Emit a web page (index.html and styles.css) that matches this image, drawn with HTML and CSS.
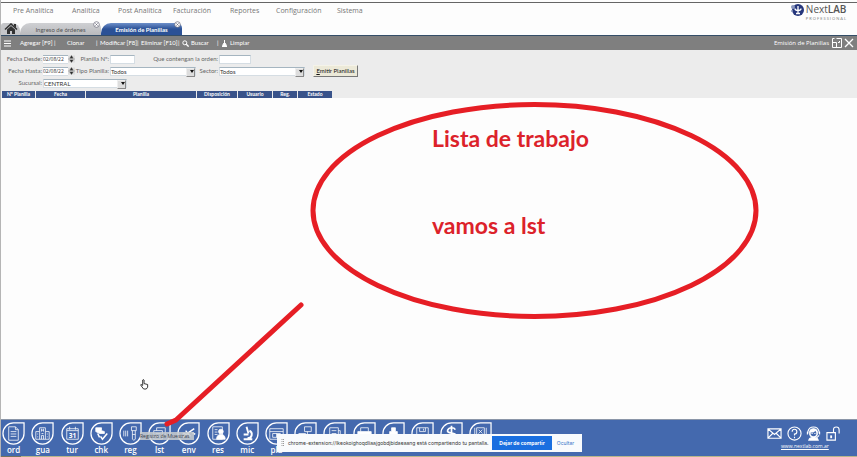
FILE: index.html
```html
<!DOCTYPE html>
<html lang="es">
<head>
<meta charset="utf-8">
<title>NextLAB - Emisión de Planillas</title>
<link rel="stylesheet" href="styles.css">
</head>
<body>
<header class="top">
  <nav class="menu">
    <a class="m1" href="#">Pre Analítica</a>
    <a class="m2" href="#">Analítica</a>
    <a class="m3" href="#">Post Analítica</a>
    <a class="m4" href="#">Facturación</a>
    <a class="m5" href="#">Reportes</a>
    <a class="m6" href="#">Configuración</a>
    <a class="m7" href="#">Sistema</a>
  </nav>
  <div class="brand">
    <svg class="brand-mark" viewBox="0 0 14 14"><circle cx="8" cy="7" r="6" fill="#26377c"/><circle cx="3" cy="4" r="2" fill="#8996bd"/><circle cx="2" cy="8" r="1" fill="#8996bd"/><path d="M8 3v7.500M5 5.500q0 2 3 2t3-2M6 10.500h4" stroke="#fff" stroke-width="1.300" fill="none"/></svg>
    <div class="brand-name"><span class="brand-main">Next<b>LAB</b></span><span class="brand-sub">PROFESSIONAL</span></div>
  </div>
</header>
<div class="tabs">
  <a class="home" href="#" aria-label="Inicio"><svg viewBox="0 0 14 12"><path d="M1 6.500 7 1l6 5.500" fill="none" stroke="#333" stroke-width="1.600"/><path d="M3 6.500 7 3l4 3.500V11H8V8H6v3H3z" fill="#333"/><path d="M10 1h2v4l-2-2z" fill="#333"/></svg></a>
  <div class="tab"><span>Ingreso de órdenes</span><button class="close" aria-label="Cerrar Ingreso de órdenes"><svg viewBox="0 0 7 7"><circle cx="3.500" cy="3.500" r="2.800"/><path d="m2.300 2.300 2.400 2.400m0-2.400L2.300 4.700"/></svg></button></div>
  <div class="tab active"><span>Emisión de Planillas</span><button class="close" aria-label="Cerrar Emisión de Planillas"><svg viewBox="0 0 7 7"><circle cx="3.500" cy="3.500" r="2.800"/><path d="m2.300 2.300 2.400 2.400m0-2.400L2.300 4.700"/></svg></button></div>
</div>
<div class="toolbar">
  <button class="burger" aria-label="Menú"><svg viewBox="0 0 7 7"><path d="M0 1h7M0 3.500h7M0 6h7" stroke="#fff"/></svg></button>
  <button class="t-add">Agregar [F9]</button><i>|</i>
  <button class="t-clone">Clonar</button><i>|</i>
  <button class="t-edit">Modificar [F8]</button><i>|</i>
  <button class="t-del">Eliminar [F10]</button><i>|</i>
  <button class="t-find"><svg viewBox="0 0 7 7"><circle cx="2.800" cy="2.800" r="2" fill="none" stroke="#fff"/><path d="m4.300 4.300 2.300 2.300" stroke="#fff" stroke-width="1.300"/></svg>Buscar</button><i>|</i>
  <button class="t-clean"><svg viewBox="0 0 7 7"><path d="M3.500 0v3M3 3h1l1.500 2.500h-4zM1 6.500h5" fill="#fff" stroke="#fff"/></svg>Limpiar</button>
  <strong>Emisión de Planillas</strong>
  <button class="win" aria-label="Restaurar"><svg viewBox="0 0 10 10"><path d="M4.500.5h5v9h-9v-9h2M.5 4.500h4v5M6 4.500h1.500V3" fill="none" stroke="#fff"/></svg></button>
  <button class="win" aria-label="Cerrar"><svg viewBox="0 0 10 10"><path d="m1 1 8 8M9 1 1 9" stroke="#fff" stroke-width="1.300"/></svg></button>
</div>
<form class="filters">
  <label class="c1" for="desde">Fecha Desde:</label>
  <span class="date"><input id="desde" value="02/08/22"><svg viewBox="0 0 8 8"><path d="M0 0h8v8H0z" fill="#ddd"/><path d="m4 0 2 3H2zM4 8l2-3H2zM0 4h8" fill="#222" stroke="#666" stroke-width=".5"/></svg></span>
  <label class="c3" for="num">Planilla Nº:</label>
  <input class="c4 num" id="num">
  <label class="c45" for="orden">Que contengan la orden:</label>
  <input class="c6 orden" id="orden">
  <label class="c1 r2" for="hasta">Fecha Hasta:</label>
  <span class="date r2"><input id="hasta" value="02/08/22"><svg viewBox="0 0 8 8"><path d="M0 0h8v8H0z" fill="#ddd"/><path d="m4 0 2 3H2zM4 8l2-3H2zM0 4h8" fill="#222" stroke="#666" stroke-width=".5"/></svg></span>
  <label class="c3 r2" for="tipo">Tipo Planilla:</label>
  <span class="pick c4 r2"><select id="tipo"><option>Todos</option></select></span>
  <label class="c5 r2" for="sector">Sector:</label>
  <span class="pick c6 r2"><select id="sector"><option>Todos</option></select></span>
  <button type="button" class="emit"><u>E</u>mitir Planillas</button>
  <label class="c1 r3" for="sucursal">Sucursal:</label>
  <span class="pick suc r3"><select id="sucursal"><option>CENTRAL</option></select></span>
</form>
<table class="list">
  <thead><tr><th class="w1">Nº Planilla</th><th class="w2">Fecha</th><th class="w3">Planilla</th><th class="w4">Disposición</th><th class="w5">Usuario</th><th class="w6">Reg.</th><th class="w7">Estado</th></tr></thead>
</table>
<main class="work"></main>
<footer class="dock">
  <div class="apps">
    <a href="#"><svg viewBox="0 0 24 24"><path class="ring" d="M12 1h11v11A11 11 0 1 1 12 1z"/><path d="M7 5h7l3 3v11H7zM14 5v3h3M9 10h6M9 12.500h6M9 15h6"/></svg>ord</a>
    <a href="#"><svg viewBox="0 0 24 24"><path class="ring" d="M12 1h11v11A11 11 0 1 1 12 1z"/><path d="M5 10h4V6h6v4h4v8H5zM11 18v-4h2v4M9 10v8M15 10v8M11 7v3M13 7v3M11 8.500h2M7 12v1M7 15v1M17 12v1M17 15v1M11 12h2"/></svg>gua</a>
    <a href="#"><svg viewBox="0 0 24 24"><path class="ring" d="M12 1h11v11A11 11 0 1 1 12 1z"/><path d="M6 7h12v11H6zM6 9h12M9 5v3M15 5v3"/><text x="12" y="16.500">31</text></svg>tur</a>
    <a href="#"><svg viewBox="0 0 24 24"><path class="ring" d="M12 1h11v11A11 11 0 1 1 12 1z"/><path class="fill" d="M6 6h6v3l3 1v2h-5l-4-2z"/><path d="m11 15 2 3 5-6M8 12l2 4" stroke-width="1.600"/></svg>chk</a>
    <a href="#"><svg viewBox="0 0 24 24"><path class="ring" d="M12 1h11v11A11 11 0 1 1 12 1z"/><path d="M5 9v6M7 9v6M9 9v6M13 5h5v4h-5zM14 9v9q1.500 2 3 0V9M14 13h3"/></svg>reg</a>
    <a href="#"><svg viewBox="0 0 24 24"><path class="ring" d="M12 1h11v11A11 11 0 1 1 12 1z"/><path d="M6 9h9v9H6zM9 9V6h9v9h-3M8 12h5M8 15h5"/></svg>lst</a>
    <a href="#"><svg viewBox="0 0 24 24"><path class="ring" d="M12 1h11v11A11 11 0 1 1 12 1z"/><path d="m6 16 6-5 6-4M9 9l5 6M6 12h3M16 11l3 2" stroke-width="1.600"/></svg>env</a>
    <a href="#"><svg viewBox="0 0 24 24"><path class="ring" d="M12 1h11v11A11 11 0 1 1 12 1z"/><path d="M6 5h10v13H6zM8 8h3M8 10.500h3M8 13h3"/><circle class="fill" cx="14.500" cy="10" r="2.500"/><path class="fill" d="M10 18q0-5 4.500-5t4.500 5z"/></svg>res</a>
    <a href="#"><svg viewBox="0 0 24 24"><path class="ring" d="M12 1h11v11A11 11 0 1 1 12 1z"/><path d="m11 5 2 7M8 18h9M12 17c5 0 6-6 2-8M8 13h5" stroke-width="2"/></svg>mic</a>
    <a href="#"><svg viewBox="0 0 24 24"><path class="ring" d="M12 1h11v11A11 11 0 1 1 12 1z"/><path d="M5 7h14v11H5zM5 10h14M8 12h8v4H8zM12 12v4"/></svg>pla</a>
    <a href="#" aria-label="Equipos"><svg viewBox="0 0 24 24"><path class="ring" d="M12 1h11v11A11 11 0 1 1 12 1z"/><path d="M11 5h7v5h-7zM5 12h7v5H5zM14 10v6h5"/></svg></a>
    <a href="#" aria-label="Informes"><svg viewBox="0 0 24 24"><path class="ring" d="M12 1h11v11A11 11 0 1 1 12 1z"/><path d="M7 6h9v12H7zM9 9h5M9 12h5M16 9h2v9"/></svg></a>
    <a href="#" aria-label="Imprimir"><svg viewBox="0 0 24 24"><path class="ring" d="M12 1h11v11A11 11 0 1 1 12 1z"/><path class="fill" d="M5 10h14v6H5z"/><path d="M8 10V6h8v4M8 15v4h8v-4"/></svg></a>
    <a href="#" aria-label="Muestras"><svg viewBox="0 0 24 24"><path class="ring" d="M12 1h11v11A11 11 0 1 1 12 1z"/><path class="fill" d="M10 6h4v4h2v8H8v-8h2z"/></svg></a>
    <a href="#" aria-label="Guardar"><svg viewBox="0 0 24 24"><path class="ring" d="M12 1h11v11A11 11 0 1 1 12 1z"/><path d="M6 6h12v12H6zM9 6v4h6V6M9 18v-5h6v5M13 7v2"/></svg></a>
    <a href="#" aria-label="Caja"><svg viewBox="0 0 24 24"><path class="ring" d="M12 1h11v11A11 11 0 1 1 12 1z"/><path d="M16 8q-1-2-4-2t-4 2.500 4 3 4 3-4 2.500-4-2M12 4v15" stroke-width="1.800"/></svg></a>
    <a href="#" aria-label="Estadísticas"><svg viewBox="0 0 24 24"><path class="ring" d="M12 1h11v11A11 11 0 1 1 12 1z"/><path d="M6 6v12M8 6h8v9H8zM18 6v12M10 8l4 4M14 8l-4 4"/></svg></a>
  </div>
  <div class="support">
    <div class="support-icons">
      <a href="#" aria-label="Correo"><svg viewBox="0 0 16 16"><path d="M1 3h14v10H1zl7 6 7-6M1 13l5-5M15 13l-5-5"/></svg></a>
      <a href="#" aria-label="Ayuda"><svg viewBox="0 0 16 16"><circle cx="8" cy="8" r="7"/><path d="M5.500 6q0-2.500 2.500-2.500T10.500 6 8 8.500V10M8 11.500V13"/></svg></a>
      <a href="#" aria-label="Soporte"><svg viewBox="0 0 16 16"><path d="M2 8V6q1-5 6-5t6 5v2M1.500 6v3M14.500 6v3M14 10l-3 3"/><path class="fill" d="M4 6q1-3 4-3t4 3v3q-1 3-4 3T4 9zM3 15q1-3 5-3t5 3z"/><path class="face" d="M5 7q4 0 5-2l1 2v2q-1 2-3 2T5 9z"/><path d="M6.500 7.500v1M9.500 7.500v1"/></svg></a>
      <a href="#" aria-label="Desbloquear"><svg viewBox="0 0 16 16"><path d="M1 7h9v8H1zM8 7V4q0-3 3-3t3 3v4"/><path d="M5.500 10v3" stroke-width="2"/></svg></a>
    </div>
    <a class="site" href="#">www.nextlab.com.ar</a>
  </div>
</footer>
<div class="edge"><span></span></div>
<div class="tip">Registro de Muestras</div>
<div class="share">
  <svg viewBox="0 0 3 8"><path d="M1 0v8M2.500 0v8" stroke="#999" stroke-dasharray="1 1"/></svg>
  <span>chrome-extension://lkeokoighoqdliaajgobdjbidaeaang está compartiendo tu pantalla.</span>
  <button class="stop">Dejar de compartir</button>
  <button class="hide">Ocultar</button>
</div>
<svg class="marks" viewBox="0 0 857 457"><ellipse cx="534.500" cy="210.500" rx="221.500" ry="106"/><path d="m301 305-125 115-9 4"/></svg>
<p class="note first">Lista de trabajo</p>
<p class="note second">vamos a lst</p>
<svg class="hand" viewBox="0 0 10 12"><path d="M3 7V1q1-1 1.500 0v4l4 1v3L7 11H4L1 7V6z" fill="#fff" stroke="#222"/></svg>
</body>
</html>
```
FILE: styles.css
```css
* { box-sizing: border-box; }
body {
  margin: 0;
  min-height: 100vh;
  display: flex;
  flex-direction: column;
  position: relative;
  background: #fdfdfd;
  border-left: 1px solid #b5b5b5;
  font: 6px/8px Lato, sans-serif;
  color: #666;
  overflow: hidden;
}
a { color: inherit; text-decoration: none; }
button, input, select { font: inherit; color: inherit; margin: 0; padding: 0; border: 0; border-radius: 0; background: none; }
svg { display: block; flex: none; }
.top { display: flex; justify-content: space-between; height: 21px; margin-top: 2px; border-top: 1px solid #666; }
.menu { display: flex; padding-left: 12px; font: 7px/15px "Open Sans", sans-serif; color: #777; white-space: nowrap; }
.m1 { width: 59px; }
.m2 { width: 46px; }
.m3 { width: 55px; }
.m4 { width: 57px; }
.m5 { width: 46px; }
.m6 { width: 61px; }
.brand { display: flex; gap: 2px; padding-right: 10px; }
.brand-mark { width: 14px; height: 14px; }
.brand-name { display: flex; flex-direction: column; }
.brand-main { font: 10px/13px "Open Sans", sans-serif; color: #555; }
.brand-main b { font-weight: 600; }
.brand-sub { font-size: 4px; line-height: 5px; letter-spacing: 1px; color: #888; }
.tabs { display: flex; height: 12px; }
.home { width: 19px; background: #c5c6c9; border-radius: 3px 8px 0 0; }
.home svg { width: 14px; height: 12px; margin-left: 3px; }
.tab { position: relative; width: 81px; text-align: center; font-size: 6px; line-height: 14px; background: linear-gradient(#cfd0d3, #b9babd); border-radius: 10px 5px 0 0; color: #555; }
.tab.active { background: linear-gradient(#6d8fc9, #2b5196 50%); color: #fff; font-weight: 700; }
.close { position: absolute; top: -2px; right: 1px; width: 7px; height: 7px; }
.close svg { fill: #fff; stroke: #667; stroke-width: 0.7; }
.toolbar { display: flex; align-items: center; height: 15px; background: #7f7f7f; border-top: 1px solid #344e68; color: #fff; padding: 0 1px 0 3px; }
.toolbar button { display: flex; align-items: center; gap: 2px; white-space: nowrap; text-align: left; }
.toolbar svg { width: 7px; height: 7px; }
.toolbar i { width: 4px; font-style: normal; }
.toolbar strong { margin-left: auto; margin-right: 3px; font: 6px/8px "Open Sans", sans-serif; white-space: nowrap; }
.toolbar .win { margin-right: 2px; }
.toolbar .win svg { width: 10px; height: 10px; }
.toolbar .t-add { width: 34px; }
.burger { width: 16px; }
.toolbar .t-clone { width: 38px; padding-left: 9px; }
.t-edit { width: 37px; }
.t-del { width: 37px; }
.t-find { width: 35px; }
.filters {
  display: grid;
  grid-template-columns: 42px 32px 35px 86px 23px 86px 52px;
  grid-template-rows: repeat(3, 10px);
  row-gap: 2px;
  height: 41px;
  padding-top: 4px;
  align-items: center;
  background: #ececec;
}
.filters label { justify-self: end; padding-right: 1px; white-space: nowrap; grid-row: 1; }
.filters input, .filters select { height: 9px; background: #fff; border: 1px solid #d5dde3; border-top-color: #a5b5c0; color: #333; line-height: 7px; width: 100%; display: block; }
.filters .r2 { grid-row: 2; }
.filters .r3 { grid-row: 3; }
.c1 { grid-column: 1; }
.c3 { grid-column: 3; }
.c4 { grid-column: 4; }
.c5 { grid-column: 5; }
.c6 { grid-column: 6; }
.c45 { grid-column: 4 / 6; }
.date { grid-column: 2; display: flex; align-items: center; grid-row: 1; }
.filters .date input { width: 25px; border-width: 1px 0; font: 5px/7px "Open Sans", sans-serif; }
.date svg { width: 7px; height: 8px; }
.filters .num { width: 25px; grid-row: 1; }
.filters .orden { width: 32px; grid-row: 1; }
.pick { position: relative; }
.pick select { appearance: none; }
.pick::before { content: ""; position: absolute; right: 1px; top: 1px; width: 7px; height: 7px; background: #ddd; border: 1px solid #888; border-top-color: #eee; border-left-color: #eee; }
.pick::after { content: ""; position: absolute; right: 2px; top: 3px; border: 2px solid transparent; border-top: 3px solid #111; }
.suc { grid-column: 2 / 5; width: 84px; }
.filters .emit { grid-column: 7; grid-row: 2; width: 45px; height: 12px; margin-left: 8px; background: #ece9d8; border: 1px solid #f5f3e8; border-right-color: #777; border-bottom-color: #777; color: #111; white-space: nowrap; }
.list { width: 100%; table-layout: fixed; border-collapse: collapse; background: #ececec; }
.list thead { display: block; }
.list tr { display: flex; gap: 1px; padding-left: 1px; }
.list th { height: 7px; padding: 0; background: #39538a; color: #fff; font: 700 5px/7px Lato, sans-serif; white-space: nowrap; }
.w1 { width: 33px; }
.w2 { width: 49px; }
.w3 { width: 110px; }
.w4 { width: 40px; }
.w5 { width: 34px; }
.w6 { width: 24px; }
.w7 { width: 34px; }
.work { flex: 1; }
.dock { display: flex; justify-content: space-between; height: 37px; background: #4469ae; border-top: 1px solid #8b96a8; color: #fff; }
.apps { display: grid; grid-template-columns: repeat(17, 1fr); width: 58%; margin-left: -2px; padding-top: 2px; }
.apps a { display: flex; flex-direction: column; align-items: center; font: 600 8px/9px "Open Sans", sans-serif; }
.apps svg { width: 23px; height: 23px; fill: none; stroke: #fff; stroke-width: 0.8; }
.apps .ring { stroke-width: 1.3; }
.apps .fill, .support .fill { fill: #fff; }
.apps text { font: 700 7px "Open Sans", sans-serif; fill: #fff; stroke: none; text-anchor: middle; }
.support { width: 74px; margin-right: 16px; padding-top: 6px; }
.support-icons { display: flex; justify-content: space-between; }
.support svg { width: 15px; height: 15px; fill: none; stroke: #fff; stroke-width: 1.2; }
.support .face { fill: #4469ae; stroke: none; }
.site { display: block; margin-left: 14px; text-decoration: underline; font: 5px/11px "Open Sans", sans-serif; }
.edge { height: 1px; background: #b8b68a; }
.edge span { display: block; width: 20px; height: 1px; background: #77745c; }
.tip { position: absolute; left: 139px; bottom: 17px; width: 54px; height: 8px; background: #c9cdd0; color: #333; font: 5px/8px "Open Sans", sans-serif; white-space: nowrap; opacity: 0.85; }
.share { position: absolute; left: 276px; bottom: 5px; width: 305px; height: 18px; padding: 0 3px 0 4px; display: flex; align-items: center; background: #f9fbfd; color: #333; font: 5px/8px Inter, sans-serif; white-space: nowrap; }
.share svg { width: 3px; height: 8px; margin-right: 4px; }
.share button { flex: none; }
.share .stop { width: 60px; height: 14px; margin-left: auto; background: #1a6fe0; color: #fff; font-weight: 700; }
.share .hide { width: 27px; color: #3373c8; }
.marks { position: absolute; inset: 0 0 auto -1px; width: 100vw; pointer-events: none; fill: none; stroke: #e61e25; stroke-width: 5; stroke-linecap: round; stroke-linejoin: round; }
.note { position: absolute; left: 431px; margin: 0; font: 700 23px/26px Lato, sans-serif; color: #dc222a; white-space: nowrap; }
.first { top: 125px; }
.second { top: 212px; }
.hand { position: absolute; left: 139px; top: 379px; width: 9px; height: 11px; }
```
